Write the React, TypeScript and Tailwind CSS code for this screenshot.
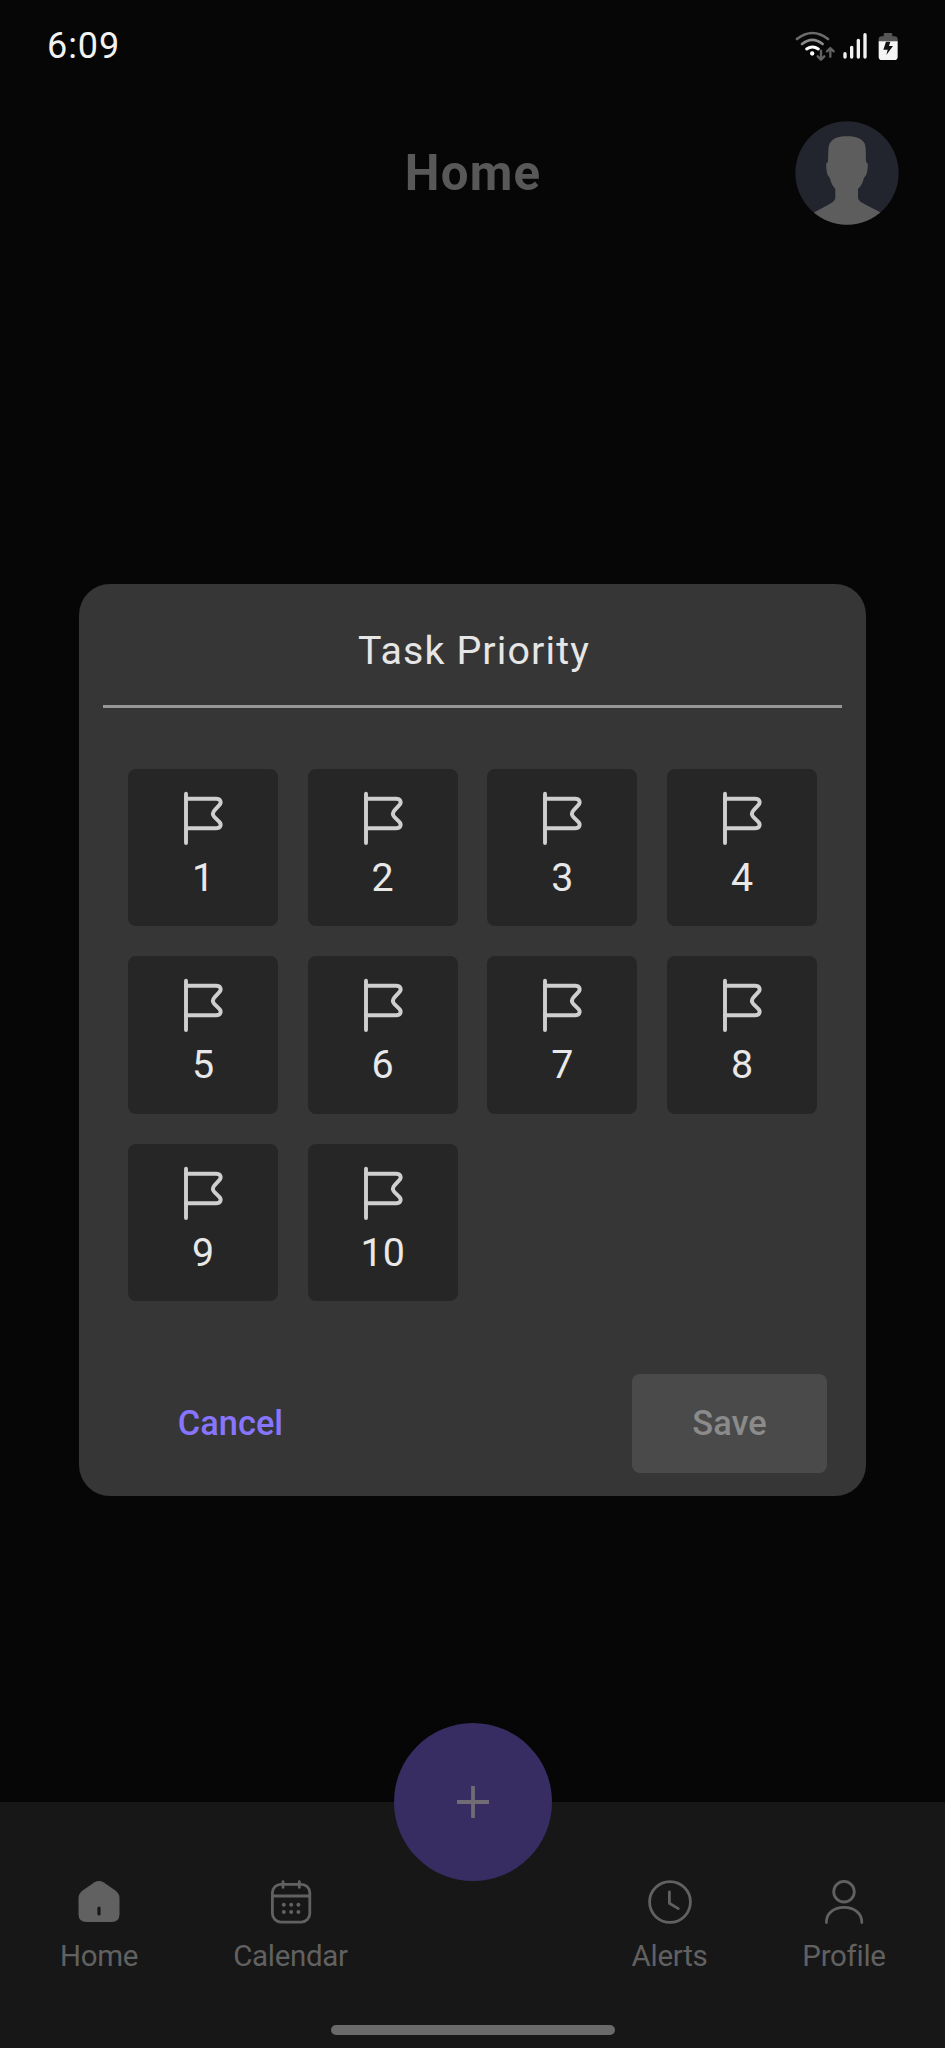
import type { ReactNode } from "react";

const priorities = [1, 2, 3, 4, 5, 6, 7, 8, 9, 10];

function StatusIcons() {
  return (
    <svg className="h-[32px] w-[110px]" viewBox="100 88 330 96" fill="none" strokeLinecap="round">
      <g strokeWidth="8">
        <path d="M112 115Q158 79 205 115" stroke="#6b6b6b" />
        <path d="M127 130Q158 105 189 130" stroke="#8a8a8a" />
        <path d="M141 145Q158 133 176 145" stroke="#fff" strokeWidth="9" />
      </g>
      <circle cx="157.500" cy="158.500" r="6.500" fill="#fff" />
      <g stroke="#626262" strokeWidth="7" strokeLinejoin="round">
        <path d="M184 150V175M174 167L184 177L194 167" />
        <path d="M212 168V144M202 152L212 142L222 152" />
      </g>
      <g stroke="#f2f2f2" strokeWidth="10">
        <path d="M256 159V169M276 140V169M296 119V169M316 102V169" />
      </g>
      <path d="M357 123V116Q357 107 366 107H372V101Q372 97 376 97H394Q398 97 398 101V107H404Q414 107 414 116V123Z" fill="#555" />
      <path d="M357 122H414V168Q414 178 404 178H367Q357 178 357 168Z" fill="#f5f5f5" />
      <path d="M379 123H392L388 136H400L380 163L384 147H371Z" fill="#111" />
    </svg>
  );
}

function Avatar() {
  return (
    <svg className="h-[104px] w-[104px]" viewBox="105 364 312 312">
      <defs>
        <clipPath id="avatar">
          <circle cx="261" cy="520" r="155" />
        </clipPath>
      </defs>
      <g clipPath="url(#avatar)">
        <rect x="105" y="364" width="312" height="312" fill="#22242e" />
        <path
          d="M261 410C238 410 222 415 212 427C204 437 205 453 204 487C197 489 198 499 200 513C201 524 205 530 209 534C212 548 219 560 226 568V592C226 603 218 608 205 615L166 636C150 645 140 660 140 680H382C382 660 374 645 358 636L317 615C304 608 294 604 294 592V568C303 560 309 547 312 534C317 530 320 524 322 513C324 499 325 489 318 487C317 453 319 437 311 427C301 415 284 410 261 410Z"
          fill="#5d5d5d"
        />
      </g>
    </svg>
  );
}

function FlagIcon() {
  return (
    <svg className="size-[60px]" viewBox="0 0 60 60" fill="none" stroke="#cfcfcf" strokeWidth="3.900" strokeLinecap="round" strokeLinejoin="round">
      <path d="M13 5.800V55" />
      <path d="M13 10.700H43C47.500 10.700 49 14.300 46.300 17.200L41.500 22.300C39.500 24.500 39.500 27 41.500 29.200L46.300 33.900C49 36.800 47.500 40.300 43 40.300H13" />
    </svg>
  );
}

function HomeIcon() {
  return (
    <svg className="size-12" viewBox="0 0 48 48">
      <path d="M19.600 4.300Q24 1.600 28.400 4.300L39.700 12Q44.500 15.400 44.500 20V36Q44.500 44 36.500 44H11.500Q3.500 44 3.500 36V20Q3.500 15.400 8.300 12Z" fill="#616161" />
      <path d="M24 30V36" stroke="#171717" strokeWidth="3.200" strokeLinecap="round" />
    </svg>
  );
}

function CalendarIcon() {
  return (
    <svg className="size-12" viewBox="0 0 48 48" fill="none" stroke="#616161" strokeWidth="2.800" strokeLinecap="round">
      <rect x="5.400" y="6.300" width="37.400" height="37.800" rx="8.500" />
      <path d="M5.400 18H42.800M16 3.600V9.400M32.300 3.600V9.400" />
      <g fill="#616161" stroke="none">
        <circle cx="16.800" cy="26.800" r="2" />
        <circle cx="24.200" cy="26.800" r="2" />
        <circle cx="31.400" cy="26.800" r="2" />
        <circle cx="16.800" cy="34" r="2" />
        <circle cx="24.200" cy="34" r="2" />
        <circle cx="31.400" cy="34" r="2" />
      </g>
    </svg>
  );
}

function ClockIcon() {
  return (
    <svg className="size-12" viewBox="0 0 48 48" fill="none" stroke="#616161" strokeWidth="2.800" strokeLinecap="round" strokeLinejoin="round">
      <circle cx="24" cy="24" r="20.400" />
      <path d="M23.400 14V25.300L32.300 30.600" />
    </svg>
  );
}

function ProfileIcon() {
  return (
    <svg className="size-12" viewBox="0 0 48 48" fill="none" stroke="#616161" strokeWidth="2.800" strokeLinecap="round">
      <circle cx="24" cy="13.700" r="10.300" />
      <path d="M6.400 44.500C6.400 35 14 29.400 24 29.400S41.800 35 41.800 44.500" />
    </svg>
  );
}

function NavItem({ label, icon, width }: { label: string; icon: ReactNode; width: string }) {
  return (
    <div className={`flex flex-col items-center pt-[76px] ${width}`}>
      {icon}
      <span className="mt-[10px] text-[29.5px] leading-[40px] tracking-[-0.3px] text-[#616161]">{label}</span>
    </div>
  );
}

export default function App() {
  return (
    <div className="relative flex h-[2048px] w-[945px] flex-col overflow-hidden bg-[#060606] font-['Roboto','Liberation_Sans',sans-serif]">
      <header className="flex h-[92px] items-center justify-between pr-[42px] pl-[47px]">
        <span className="text-[36px] leading-none tracking-[0.9px] text-[#f2f2f2]">6:09</span>
        <StatusIcons />
      </header>
      <div className="grid h-[163px] grid-cols-[1fr_auto_1fr] items-center pr-[46px] pl-[47px]">
        <h1 className="col-start-2 text-[49.2px] leading-none font-bold tracking-[1.2px] text-[#585858]">Home</h1>
        <div className="-mt-px justify-self-end">
          <Avatar />
        </div>
      </div>

      <main className="mt-[329px] ml-[79px] flex h-[912px] w-[787px] flex-col rounded-[31px] bg-[#363636] pt-[37px]">
        <h2 className="pl-[3px] text-center text-[39.4px] leading-[60px] tracking-[1.1px] text-[#e6e6e6]">Task Priority</h2>
        <div className="mx-6 mt-[24px] h-[3px] bg-[#979797]" />
        <div className="mt-[61px] ml-[49px] grid w-[689px] grid-cols-4 gap-x-[29.6px] gap-y-[30px]">
          {priorities.map((n) => (
            <button key={n} className="flex h-[157.4px] flex-col items-center rounded-[8px] bg-[#262626] pt-[19px]">
              <FlagIcon />
              <span className="mt-px text-[39.4px] leading-[58px] text-[#e8e8e8]">{n}</span>
            </button>
          ))}
        </div>
        <div className="mt-[73px] flex justify-between pr-[39px] pl-[54px] text-[34.4px] font-medium">
          <button className="h-[99px] w-[195px] text-[#8875ff]">Cancel</button>
          <button className="h-[99px] w-[195px] rounded-[8px] bg-[#4a4a4a] text-[#8b8b8b]">Save</button>
        </div>
      </main>

      <nav className="relative mt-auto flex h-[246px] bg-[#171717]">
        <NavItem label="Home" icon={<HomeIcon />} width="w-[198px]" />
        <NavItem label="Calendar" icon={<CalendarIcon />} width="w-[185px]" />
        <div className="flex w-[179px] flex-col items-center justify-between">
          <button className="-mt-[79px] flex size-[158px] items-center justify-center rounded-full bg-[#372d63]">
            <svg className="size-[34px]" viewBox="0 0 34 34" stroke="#716c74" strokeWidth="3.800">
              <path d="M1 17H33M17 1V33" />
            </svg>
          </button>
          <div className="mb-[13px] h-[10px] w-[284px] rounded-full bg-[#6a6a6a]" />
        </div>
        <NavItem label="Alerts" icon={<ClockIcon />} width="w-[215px]" />
        <NavItem label="Profile" icon={<ProfileIcon />} width="w-[134px]" />
      </nav>
    </div>
  );
}
